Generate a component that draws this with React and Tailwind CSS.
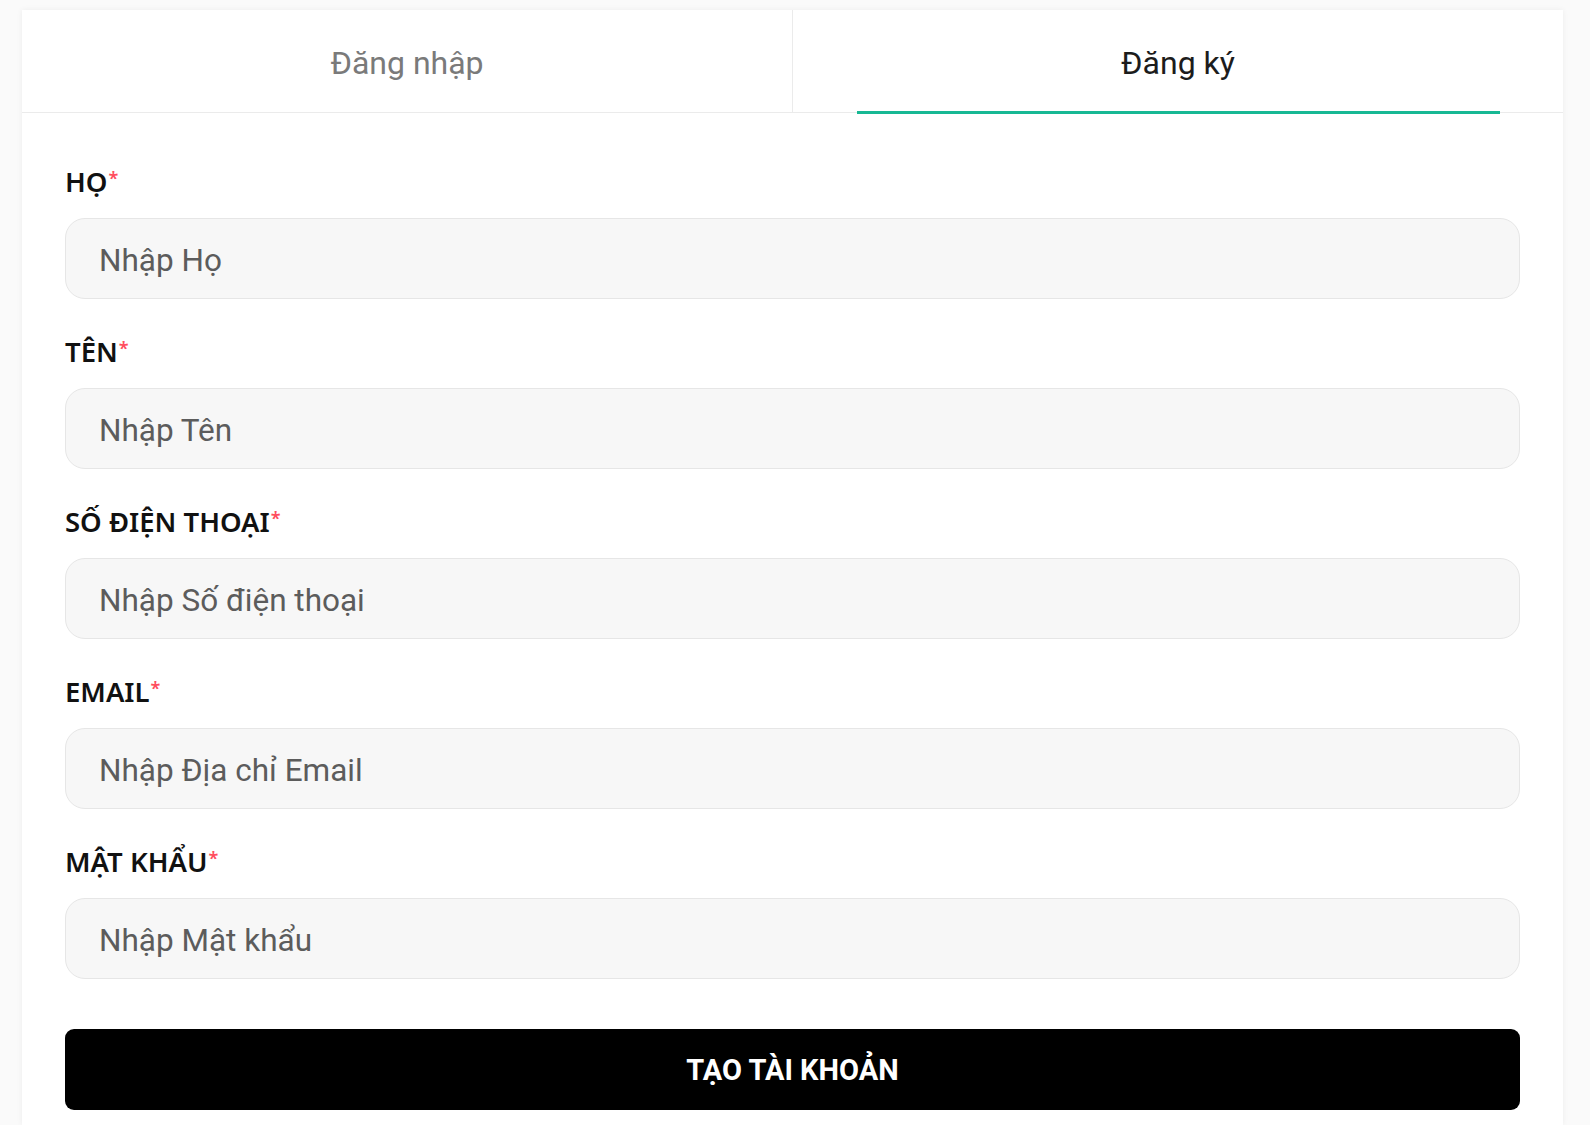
import React from "react";

const fields = [
  { label: "HỌ", placeholder: "Nhập Họ" },
  { label: "TÊN", placeholder: "Nhập Tên" },
  { label: "SỐ ĐIỆN THOẠI", placeholder: "Nhập Số điện thoại" },
  { label: "EMAIL", placeholder: "Nhập Địa chỉ Email" },
  { label: "MẬT KHẨU", placeholder: "Nhập Mật khẩu" },
];

export default function App() {
  return (
    <div
      className="min-h-[1125px] w-full bg-[#fafafa] pt-[10px] pl-[22px] pr-[27px]"
      style={{ fontFamily: "Roboto, 'Noto Sans', sans-serif" }}
    >
      <div className="w-[1541px] bg-white shadow-[0_0_6px_rgba(0,0,0,0.06)] min-h-[1115px]">
        {/* Tabs */}
        <div className="flex h-[103px] border-b border-[#ebebeb]">
          <button className="flex-1 flex items-center justify-center border-r border-[#ebebeb] text-[32px] text-[#7a7a7a] pt-[3px]">
            Đăng nhập
          </button>
          <button className="relative flex-1 flex items-center justify-center text-[32px] text-[#1c1c1c] pt-[3px]">
            Đăng ký
            <span className="absolute left-[64px] right-[63px] bottom-[-2px] h-[3px] bg-[#17b894]" />
          </button>
        </div>

        {/* Form */}
        <div className="px-[43px] pt-[50px]">
          {fields.map((f) => (
            <div key={f.label} className="mb-[34px]">
              <div
                className="h-[36px] flex items-center text-[27.5px] font-semibold text-[#111] leading-none pt-[1px]"
                style={{ fontFamily: "'Noto Sans', Roboto, sans-serif" }}
              >
                {f.label}
                <span className="text-[#ff4d5e] text-[18px] self-start mt-[5px] ml-[1px]">*</span>
              </div>
              <input
                type="text"
                placeholder={f.placeholder}
                className="mt-[19px] block w-full h-[81px] rounded-[20px] border border-[#e6e6e6] bg-[#f7f7f7] pl-[33px] pt-[4px] text-[31.5px] text-[#333] placeholder:text-[#5c5c5c] outline-none"
              />
            </div>
          ))}
          <button className="mt-[16px] w-full h-[81px] rounded-[9px] bg-black text-white text-[29px] font-bold pt-[3px]">
            TẠO TÀI KHOẢN
          </button>
        </div>
      </div>
    </div>
  );
}
